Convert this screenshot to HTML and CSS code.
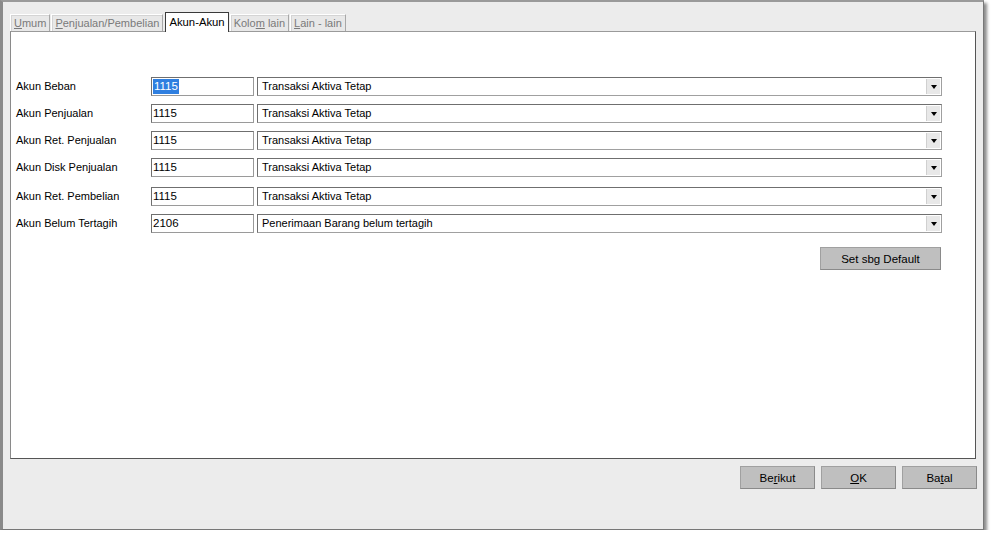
FILE: index.html
```html
<!DOCTYPE html>
<html>
<head>
<meta charset="utf-8">
<link rel="stylesheet" href="styles.css">
</head>
<body>
<div class="window">
  <div class="tabs">
    <div class="tab"><u>U</u>mum</div>
    <div class="tab"><u>P</u>enjualan/Pembelian</div>
    <div class="tab active">Akun-Akun</div>
    <div class="tab">Kolo<u>m</u> lain</div>
    <div class="tab"><u>L</u>ain - lain</div>
  </div>
  <div class="panel">
    <div class="row">
      <div class="label">Akun Beban</div>
      <div class="code"><span class="sel">1115</span></div>
      <div class="combo"><span class="ctext">Transaksi Aktiva Tetap</span><span class="arrow"></span></div>
    </div>
    <div class="row">
      <div class="label">Akun Penjualan</div>
      <div class="code">1115</div>
      <div class="combo"><span class="ctext">Transaksi Aktiva Tetap</span><span class="arrow"></span></div>
    </div>
    <div class="row">
      <div class="label">Akun Ret. Penjualan</div>
      <div class="code">1115</div>
      <div class="combo"><span class="ctext">Transaksi Aktiva Tetap</span><span class="arrow"></span></div>
    </div>
    <div class="row">
      <div class="label">Akun Disk Penjualan</div>
      <div class="code">1115</div>
      <div class="combo"><span class="ctext">Transaksi Aktiva Tetap</span><span class="arrow"></span></div>
    </div>
    <div class="row row-extra">
      <div class="label">Akun Ret. Pembelian</div>
      <div class="code">1115</div>
      <div class="combo"><span class="ctext">Transaksi Aktiva Tetap</span><span class="arrow"></span></div>
    </div>
    <div class="row">
      <div class="label">Akun Belum Tertagih</div>
      <div class="code">2106</div>
      <div class="combo"><span class="ctext">Penerimaan Barang belum tertagih</span><span class="arrow"></span></div>
    </div>
    <div class="default-row">
      <div class="btn btn-default">Set sbg Default</div>
    </div>
  </div>
  <div class="footer">
    <div class="btn">Be<u>r</u>ikut</div>
    <div class="btn"><u>O</u>K</div>
    <div class="btn">Ba<u>t</u>al</div>
  </div>
</div>
</body>
</html>
```
FILE: styles.css
```css
html, body {
  margin: 0;
  padding: 0;
  background: #ffffff;
}
body {
  font-family: "Liberation Sans", Arial, sans-serif;
  font-size: 11px;
  color: #000;
}
.window {
  box-sizing: border-box;
  width: 984px;
  height: 530px;
  background: #ececec;
  border-left: 3px solid #8a8a8a;
  border-top: 2px solid #9a9a9a;
  border-right: 1px solid #777;
  border-bottom: 1px solid #777;
  box-shadow: 3px 3px 3px rgba(0, 0, 0, 0.45);
  padding: 10px 6px 0 7px;
  display: flex;
  flex-direction: column;
}
.tabs {
  display: flex;
  align-items: flex-end;
  height: 19px;
}
.tab {
  box-sizing: border-box;
  height: 17px;
  padding: 1px 3px 0 3px;
  margin-right: 1px;
  border-top: 1px solid #fff;
  border-left: 1px solid #fff;
  border-right: 1px solid #a8a8a8;
  color: #7a7a7a;
  line-height: 15px;
  background: #e8e8e8;
  box-shadow: inset 1px 1px 0 #d4d4d4;
}
.tab.active {
  height: 20px;
  margin: 0 1px 0 1px;
  border: 1px solid #3a3a3a;
  border-bottom: none;
  background: #fff;
  color: #000;
  padding: 2px 3px 0 3px;
  font-size: 11.3px;
  position: relative;
  top: 1px;
  box-shadow: none;
}
.panel {
  box-sizing: border-box;
  width: 966px;
  height: 428px;
  background: #fff;
  border: 1px solid #8a8a8a;
  border-top-color: #9a9a9a;
  border-right-color: #555;
  border-bottom-color: #555;
  padding: 45px 0 0 5px;
  display: flex;
  flex-direction: column;
  gap: 8px;
}
.row {
  display: flex;
  align-items: center;
  height: 19px;
}
.row-extra { margin-top: 2px; }
.label {
  width: 135px;
  flex: none;
  position: relative;
  top: -1px;
}
.code {
  box-sizing: border-box;
  width: 103px;
  height: 19px;
  border: 1px solid #6f6f6f;
  border-right-color: #9a9a9a;
  border-bottom-color: #9a9a9a;
  padding: 1px 0 0 1px;
  line-height: 15px;
  font-size: 11.5px;
  margin-right: 3px;
}
.sel {
  background: #2f7fe0;
  color: #fff;
  display: inline-block;
  padding: 0 1px;
  line-height: 15px;
}
.combo {
  box-sizing: border-box;
  width: 685px;
  height: 19px;
  border: 1px solid #6f6f6f;
  border-right-color: #a0a0a0;
  border-bottom-color: #a0a0a0;
  display: flex;
  align-items: center;
  justify-content: space-between;
  padding: 0 1px 0 4px;
}
.ctext { line-height: 15px; }
.arrow {
  box-sizing: border-box;
  width: 14px;
  height: 15px;
  background: #e8e8e8;
  border-left: 1px solid #d0d0d0;
  position: relative;
}
.arrow::after {
  content: "";
  position: absolute;
  left: 4px;
  top: 6px;
  border-left: 3px solid transparent;
  border-right: 3px solid transparent;
  border-top: 4px solid #000;
}
.default-row {
  display: flex;
  padding-left: 804px;
  margin-top: 6px;
}
.btn {
  box-sizing: border-box;
  width: 75px;
  height: 23px;
  background: #bfbfbf;
  border: 1px solid #8a8a8a;
  border-top-color: #a0a0a0;
  border-left-color: #a0a0a0;
  display: flex;
  align-items: center;
  justify-content: center;
  font-size: 11.5px;
}
.btn-default {
  width: 121px;
}
.footer {
  display: flex;
  justify-content: flex-end;
  gap: 6px;
  margin-top: 7px;
  margin-right: 0;
}
```
